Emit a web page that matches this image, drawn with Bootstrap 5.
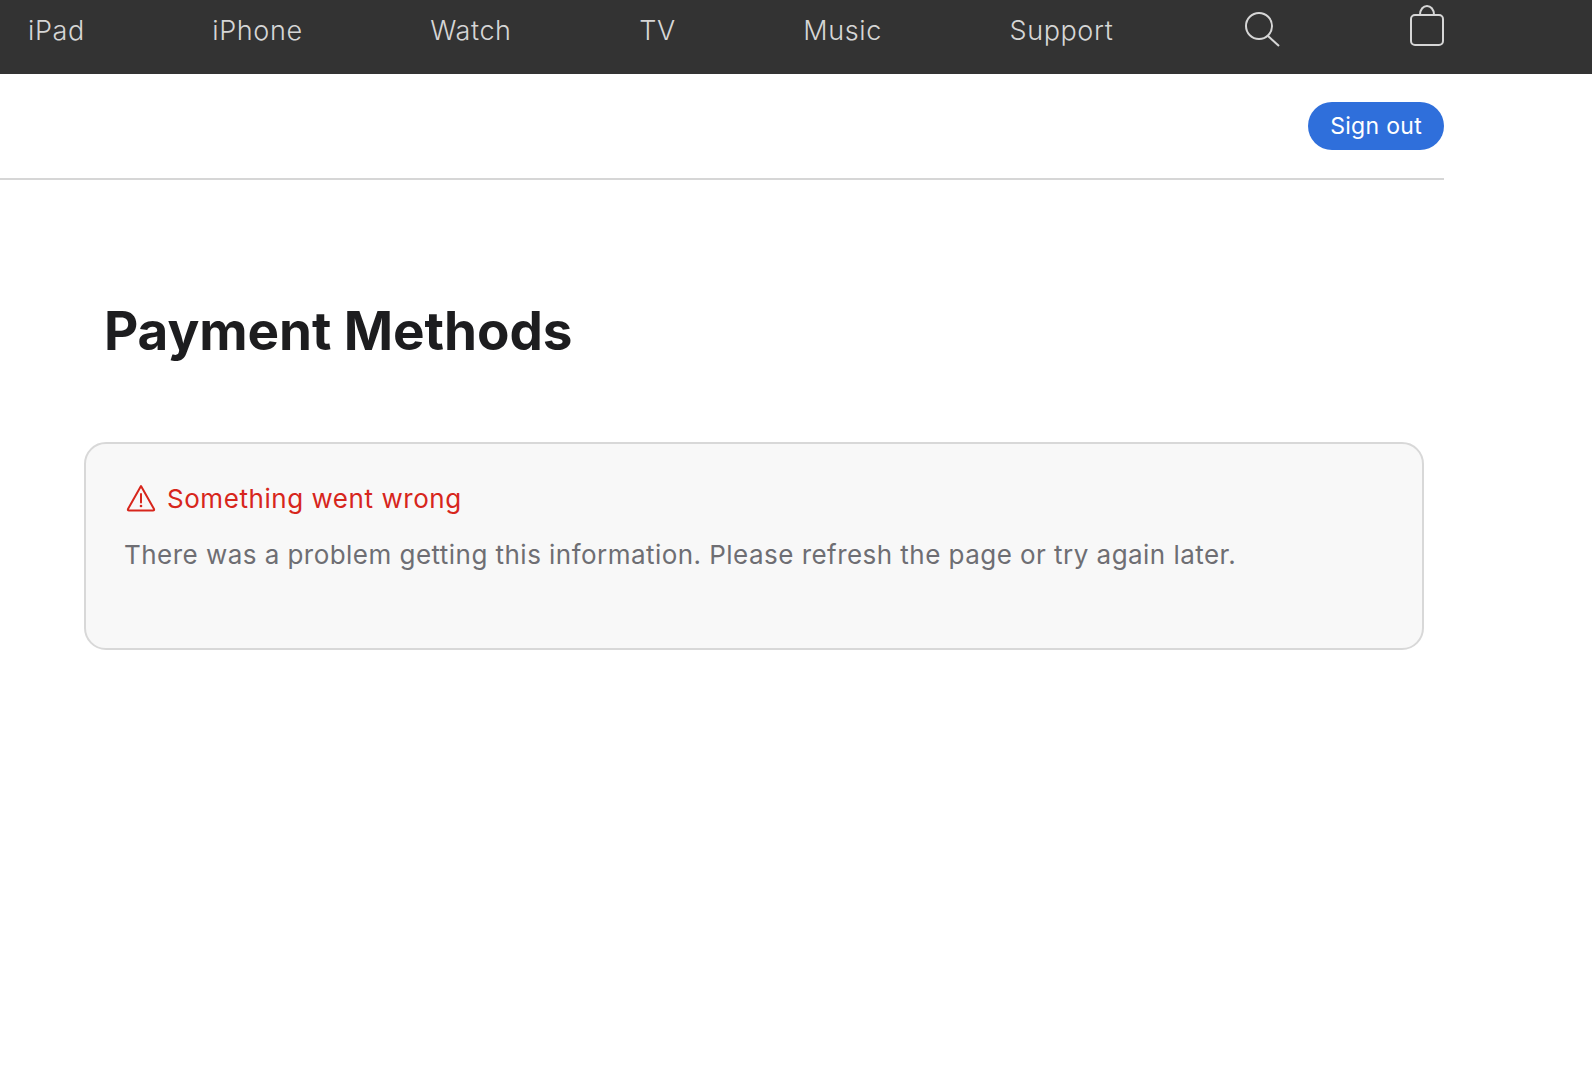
<!DOCTYPE html>
<html lang="en">
<head>
<meta charset="utf-8">
<title>Payment Methods</title>
<link href="https://cdn.jsdelivr.net/npm/bootstrap@5.3.0/dist/css/bootstrap.min.css" rel="stylesheet">
<script src="https://cdn.jsdelivr.net/npm/bootstrap@5.3.0/dist/js/bootstrap.bundle.min.js"></script>
<style>
body { font-family: Inter, "Liberation Sans", sans-serif; background: #fff; overflow: hidden; }
.topnav { height: 74px; background: #333; padding: 0 148px 0 28px; }
.topnav a { color: #d6d6d6; font-size: 27px; font-weight: 300; letter-spacing: .6px; line-height: 61px; text-decoration: none; }
.topnav .nav-entry { margin-right: 127.600px; }
.topnav svg { display: block; }
.search-link { margin-left: 4.400px; }
.bag-link { margin-left: auto; }
.acct { width: 1444px; height: 106px; border-bottom: 2px solid #d6d6d6; padding-top: 28px; }
.btn-signout { background: #2f6fdb; color: #fff; font-size: 23px; letter-spacing: .3px; line-height: 48px; height: 48px; padding: 0 22px; border: 0; border-radius: 24px; }
.btn-signout:hover { background: #2f6fdb; color: #fff; }
.page-title { font-size: 53px; font-weight: 700; letter-spacing: -.07px; line-height: 64px; color: #1d1d1f; margin: 119px 0 79px 104px; }
.err-box { margin-left: 84px; width: 1340px; height: 208px; background: #f8f8f8; border: 2px solid #d8d8d8; border-radius: 22px; padding: 37px 38px; }
.err-title { color: #d7261c; font-size: 26px; letter-spacing: .55px; line-height: 36px; gap: 11px; margin-bottom: 20px; padding-left: 2px; }
.err-title svg { margin-bottom: 3px; }
.err-text { color: #6e6e73; font-size: 26px; letter-spacing: .46px; line-height: 36px; margin: 0; }
</style>
</head>
<body>
<nav class="topnav d-flex align-items-start">
  <a class="nav-entry" href="#">iPad</a>
  <a class="nav-entry" href="#">iPhone</a>
  <a class="nav-entry" href="#">Watch</a>
  <a class="nav-entry" href="#">TV</a>
  <a class="nav-entry" href="#">Music</a>
  <a class="nav-entry" href="#">Support</a>
  <a class="search-link" href="#" aria-label="Search"><svg width="36" height="50" viewBox="0 0 36 50" fill="none" stroke="#d6d6d6" stroke-width="2"><circle cx="14" cy="26" r="13"/><path d="M23 36 L34 46"/></svg></a>
  <a class="bag-link" href="#" aria-label="Bag"><svg width="34" height="50" viewBox="0 0 34 50" fill="none" stroke="#d6d6d6" stroke-width="2"><rect x="1" y="15" width="32" height="30" rx="4"/><path d="M10 15 C10 3 24 3 24 15"/></svg></a>
</nav>
<div class="acct d-flex justify-content-end align-items-start">
  <button class="btn btn-signout" type="button">Sign out</button>
</div>
<h1 class="page-title">Payment Methods</h1>
<div class="err-box">
  <div class="err-title d-flex align-items-center">
    <svg width="30" height="28" viewBox="0 0 30 28" fill="none" stroke="#d7261c" stroke-width="2" stroke-linejoin="round"><path d="M15 2 L28 25 Q28.500 26.500 27 26.500 L3 26.500 Q1.500 26.500 2 25 Z"/><path d="M15 10 V18.500" stroke-linecap="round"/><circle cx="15" cy="22" r="1.300" fill="#d7261c" stroke="none"/></svg>
    <span>Something went wrong</span>
  </div>
  <p class="err-text">There was a problem getting this information. Please refresh the page or try again later.</p>
</div>
</body>
</html>
